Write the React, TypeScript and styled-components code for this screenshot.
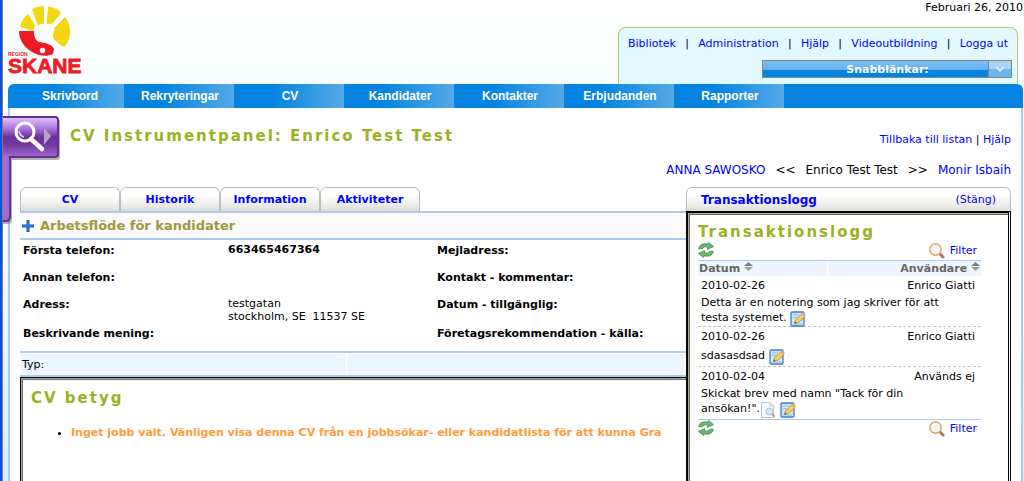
import React from "react";
import styled, { createGlobalStyle, css } from "styled-components";

const Global = createGlobalStyle`
  * { box-sizing: border-box; }
  html, body, #root { height: 100%; }
  body {
    margin: 0;
    background: #fff;
    color: #000;
    font: 11px/16px Verdana, "DejaVu Sans", sans-serif;
  }
  a { color: #00f; text-decoration: none; }
  svg { display: block; }
`;

const Page = styled.div`
  position: relative;
  display: flex;
  flex-direction: column;
  min-height: 100%;
  border-left: 2px solid #0a50d8;
  box-shadow: inset 1px 0 #808080;
  padding: 0 1px 0 6px;
  background: linear-gradient(#fff 0, #f8feff 84px, #fff 108px, #fff 200px, #d8ecfb 481px);
  background-clip: padding-box;
`;

const Header = styled.header`
  display: flex;
  justify-content: space-between;
  height: 84px;
`;

const Logo = styled.svg`
  margin-top: 5px;
`;

const HeaderRight = styled.div`
  display: flex;
  flex-direction: column;
  justify-content: space-between;
`;

const DateText = styled.div`
  text-align: right;
`;

const QuickBox = styled.div`
  display: flex;
  flex-direction: column;
  align-items: flex-end;
  gap: 8px;
  width: 400px;
  height: 57px;
  margin-right: 5px;
  padding: 8px 5px 0 9px;
  border: 1px solid #b9cc6c;
  border-bottom: 0;
  border-radius: 8px 8px 0 0;
  background: #e1f9ff;
`;

const TopLinks = styled.nav`
  display: flex;
  justify-content: space-between;
  align-self: stretch;
  padding-right: 4px;
`;

const QuickSelect = styled.button`
  display: flex;
  width: 250px;
  height: 18px;
  padding: 0;
  border: 1px solid #7c8a94;
  background: linear-gradient(#7dbcf0 0, #66b0ec 9px, #0484e0 9px);
  color: #fff;
  font: bold 11px/17px Verdana, "DejaVu Sans", sans-serif;
`;

const QuickLabel = styled.span`
  flex: 1;
  padding-left: 24px;
`;

const QuickArrow = styled.span`
  display: grid;
  place-items: center;
  width: 23px;
  height: 16px;
  border-left: 1px solid #7c8a94;
  background: linear-gradient(#a9d3f6 50%, #6fb4ec 50%);
`;

const MainNav = styled.nav`
  display: flex;
  height: 24px;
  padding-left: 6px;
  border-radius: 6px 6px 0 0;
  background: #0484e0;
`;

const NavItem = styled.a`
  width: 110px;
  padding-left: 2px;
  background: linear-gradient(90deg, #0484e0 35%, #55a9e6);
  color: #fff;
  font: bold 12px/25px "Liberation Sans", Arial, sans-serif;
  text-align: center;
`;

const Body = styled.main`
  display: flex;
  flex: 1;
  flex-direction: column;
  padding: 0 10px;
  border: solid #a8cbef;
  border-width: 0 2px;
  background: #fff;
`;

const TitleRow = styled.div`
  display: flex;
  justify-content: space-between;
  height: 54px;
  padding: 18px 0 0 50px;
`;

const heading = css`
  margin: 0;
  color: #9cb023;
  font-size: 15px;
  line-height: 20px;
  letter-spacing: 2px;
`;

const Title = styled.h1`${heading}`;
const SubTitle = styled.h2`${heading}`;

const TitleLinks = styled.div`
  padding-top: 6px;
`;

const Pager = styled.div`
  display: flex;
  justify-content: flex-end;
  gap: 10px;
  height: 25px;
  font-size: 12px;
`;

const Columns = styled.div`
  display: flex;
  flex: 1;
`;

const Left = styled.section`
  display: flex;
  flex: 1;
  flex-direction: column;
  min-width: 0;
  overflow: hidden;
  white-space: nowrap;
`;

const tabLook = css`
  height: 24px;
  border: 1px solid #bdbdbd;
  border-bottom: 0;
  border-radius: 6px 6px 0 0;
  background: linear-gradient(#fff 30%, #f3f3f1 60%, #dcdcd9);
  line-height: 24px;
`;

const Tabs = styled.div`
  display: flex;
`;

const Tab = styled.a`
  ${tabLook}
  width: 100px;
  font-weight: bold;
  text-align: center;
`;

const Workflow = styled.h2`
  display: flex;
  align-items: center;
  gap: 6px;
  height: 29px;
  margin: 0;
  padding-left: 2px;
  border: solid #a8cbef;
  border-width: 2px 0;
  background: #fafafa;
  color: #a0993a;
  font-size: 13px;
`;

const Fields = styled.dl`
  display: grid;
  grid-template-columns: 205px 209px 230px 1fr;
  grid-template-rows: 27px 27px 29px 25px;
  height: 111px;
  margin: 0;
  padding: 3px 0 0 3px;
`;

const Field = styled.dt`
  font-weight: bold;
`;

const Value = styled.dd<{ $bold?: boolean }>`
  margin: 0;
  font-weight: ${(p) => (p.$bold ? "bold" : "normal")};
  line-height: 13px;
  white-space: pre;
`;

const TypeRow = styled.div`
  display: grid;
  grid-template-columns: 325px 1fr;
  gap: 1px;
  height: 26px;
  padding: 1px;
  border: solid #a8cbef;
  border-width: 2px 0;
`;

const TypeCell = styled.div`
  padding-left: 1px;
  background: #edf6fe;
  line-height: 21px;
`;

const Frame = styled.div`
  flex: 1;
  border: solid #000;
  border-width: 1px 0 0 1px;
  box-shadow: inset 1px 1px #aca899, inset 2px 2px #716f64;
`;

const Rating = styled(Frame)`
  padding: 10px;
`;

const Notice = styled.ul`
  margin: 17px 0 0;
  padding-left: 40px;
`;

const NoticeText = styled.strong`
  color: #ff9c3a;
`;

const Log = styled.aside`
  display: flex;
  flex-direction: column;
  width: 325px;
`;

const LogTab = styled.div`
  ${tabLook}
  display: flex;
  justify-content: space-between;
  padding: 0 14px;
`;

const LogTitle = styled.a`
  font-size: 12px;
  font-weight: bold;
`;

const LogFrame = styled(Frame)`
  padding: 9px 27px 0 10px;
  border-width: 2px 3px 0 2px;
  border-right-style: double;
`;

const Tools = styled.div`
  display: flex;
  align-items: flex-start;
  justify-content: space-between;
  height: 18px;
  padding-right: 4px;
`;

const IconButton = styled.button`
  padding: 0;
  border: 0;
  background: none;
`;

const FilterLink = styled.a`
  display: flex;
  align-items: center;
  gap: 5px;
  line-height: 18px;
`;

const LogTable = styled.table`
  width: 100%;
  border-collapse: separate;
  border-spacing: 0;
  border: solid #a8cbef;
  border-width: 1px 0;
`;

const Th = styled.th<{ $right?: boolean }>`
  height: 15px;
  padding: 0 1px;
  border-left: ${(p) => (p.$right ? "1px solid #fff" : "0")};
  background: #edf6fe;
  color: #666;
  line-height: 14px;
  text-align: ${(p) => (p.$right ? "right" : "left")};
  svg { display: inline-block; }
`;

const Td = styled.td<{ $right?: boolean }>`
  height: 18px;
  padding: 1px 6px 0 3px;
  text-align: ${(p) => (p.$right ? "right" : "left")};
`;

const Note = styled.td`
  height: 22px;
  padding: 1px 20px 1px 3px;
  border-bottom: 1px dashed #c4c4c4;
  line-height: 15px;
  tr:last-child > & { padding-bottom: 3px; border-bottom: 0; }
  svg { display: inline-block; margin: -2px 0; vertical-align: -4px; }
`;

const SearchFlap = styled.button`
  position: absolute;
  top: 115px;
  left: 1px;
  padding: 0;
  border: 0;
  background: none;
`;

const RefreshIcon = () => (
  <svg width="16" height="16" viewBox="0 0 16 16" fill="#6bb56c" stroke="#3f8549" strokeWidth=".8" strokeLinejoin="round">
    <path d="M.6 6.800C1.500 2.600 5.500 1 9.500 2.300L10.500.500 15.500 4.600 9.400 7.300 9.600 5.300C7.500 4.400 5.500 4.800 4.600 6.500Z" />
    <path d="M15.400 9.200C14.500 13.400 10.500 15 6.500 13.700L5.500 15.500.500 11.400 6.600 8.700 6.400 10.700C8.500 11.600 10.500 11.200 11.400 9.500Z" />
  </svg>
);

const FilterIcon = () => (
  <svg width="16" height="16" viewBox="0 0 16 16">
    <path d="M10.800 10.800 14 14" stroke="#b07a58" strokeWidth="3" strokeLinecap="round" />
    <circle cx="6.500" cy="6.500" r="5.700" fill="#f1f3f6" stroke="#dba660" strokeWidth="1.400" />
    <path d="M3.200 6.500A3.300 3.300 0 0 1 6.500 3.200" stroke="#fff" fill="none" />
  </svg>
);

const EditIcon = () => (
  <svg width="16" height="16" viewBox="0 0 16 16">
    <rect x="1" y="1" width="13" height="14" rx="1" fill="#cfe4f8" stroke="#3b7fcb" strokeWidth="1.300" />
    <path d="M3 4H9M3 6.500H7M3 13H12" stroke="#9cc3e8" />
    <path d="M4.500 12.500 5.500 9 12 2.500 15 5.500 8.500 11.500Z" fill="#f7cf62" stroke="#b98a35" strokeWidth=".8" />
    <path d="M12 2.500 13.300 1.400 16 4.200 15 5.500Z" fill="#e9a27c" />
    <path d="M4.500 12.500 5 10.500 6.500 12Z" fill="#444" />
  </svg>
);

const PreviewIcon = () => (
  <svg width="16" height="16" viewBox="0 0 16 16">
    <path d="M1.500.5H10L13.500 4V15.500H1.500Z" fill="#f8f9fa" stroke="#c3c7cb" />
    <path d="M10 .5V4H13.500" fill="#e2e5e8" stroke="#c3c7cb" />
    <path d="M12 12 14.500 14.700" stroke="#c69a80" strokeWidth="2" />
    <circle cx="9.500" cy="9.500" r="3.400" fill="#d2e6f7" stroke="#a9c4dc" />
  </svg>
);

const SortIcon = () => (
  <svg width="9" height="10" viewBox="0 0 9 10">
    <path d="M4.500 0 9 4H0Z" fill="#7d7d7d" />
    <path d="M0 5H9L4.500 9Z" fill="#9d9d9d" />
  </svg>
);

const PlusIcon = () => (
  <svg width="12" height="12" viewBox="0 0 12 12">
    <path d="M4.500 0H7.500V4.500H12V7.500H7.500V12H4.500V7.500H0V4.500H4.500Z" fill="#1c5fbe" />
    <path d="M6 1V11M1 6H11" stroke="#2f86dc" />
  </svg>
);

const SkaneLogo = () => (
  <Logo width="80" height="76" viewBox="8 5 80 76" role="img" aria-label="Region Skåne">
    <g fill="#f2d60f">
      <path d="M28 14 35 25 33 31 20 27C21 22 24 17 28 14Z" />
      <path d="M32 9C36 7 40 6 44 6L44 24C42 23.500 40 24 38 26Z" />
      <path d="M48 6.500C53 7 58 9 61 13L52 24C50 23.500 48 24 46.500 23.500Z" />
      <path d="M65 17C69 22 70 27 70 32 70 39 67 44 64 47L60 45C57 41 53 40 53 36 53 33 55 31 54 28Z" />
    </g>
    <path d="M19 31H34C34 36 35 40 39 42 44 43 51 43 54 49L53 54C47 57 38 56 32 52 24 47 19 40 19 31Z" fill="#ed1c24" />
    <circle cx="42.500" cy="50.500" r="2.700" fill="#fff" />
    <g fill="#ed1c24" fontFamily="Liberation Sans, Arial, sans-serif" fontWeight="bold">
      <text x="8" y="56" fontSize="5">REGION</text>
      <text x="8" y="73" fontSize="21" stroke="#ed1c24" strokeWidth=".8">SKANE</text>
    </g>
  </Logo>
);

const FlapArt = () => (
  <svg width="58" height="112" viewBox="0 0 58 112">
    <defs>
      <linearGradient id="flap" gradientUnits="userSpaceOnUse" x1="0" y1="2" x2="0" y2="42">
        <stop offset="0" stopColor="#e6caff" />
        <stop offset=".3" stopColor="#a970da" />
        <stop offset=".5" stopColor="#6b3199" />
        <stop offset=".7" stopColor="#74389f" />
        <stop offset="1" stopColor="#a06bd2" />
      </linearGradient>
    </defs>
    <path d="M0 4H54Q57 4 57 7V42Q57 45 54 45H9V105Q9 109 5 109H0Z" fill="#666" opacity=".5" />
    <path d="M-3 2H52Q55 2 55 5V39Q55 42 52 42H7V102Q7 106 3 106H-3Z" fill="url(#flap)" stroke="#622f92" strokeWidth="2" />
    <path d="M41 13 48 21 41 30Z" fill="#b5a3c6" />
    <path d="M28 24 39 34" stroke="#fff" strokeWidth="4.500" strokeLinecap="round" />
    <circle cx="22" cy="17" r="9" fill="none" stroke="#fff" strokeWidth="3" />
    <path d="M16 16Q17 21 21 22" stroke="#e3d2f3" fill="none" strokeWidth="1.500" />
  </svg>
);

const topLinks = ["Bibliotek", "Administration", "Hjälp", "Videoutbildning", "Logga ut"];
const navItems = ["Skrivbord", "Rekryteringar", "CV", "Kandidater", "Kontakter", "Erbjudanden", "Rapporter"];
const tabs = ["CV", "Historik", "Information", "Aktiviteter"];
const entries = [
  { date: "2010-02-26", user: "Enrico Giatti", text: "Detta är en notering som jag skriver för att testa systemet. ", preview: false },
  { date: "2010-02-26", user: "Enrico Giatti", text: "sdasasdsad ", preview: false },
  { date: "2010-02-04", user: "Används ej", text: 'Skickat brev med namn "Tack för din ansökan!".', preview: true },
];

const LogTools = () => (
  <Tools>
    <IconButton aria-label="Uppdatera"><RefreshIcon /></IconButton>
    <FilterLink href="#"><FilterIcon />Filter</FilterLink>
  </Tools>
);

export default function App() {
  return (
    <>
      <Global />
      <Page>
        <Header>
          <SkaneLogo />
          <HeaderRight>
            <DateText>Februari 26, 2010</DateText>
            <QuickBox>
              <TopLinks>
                {topLinks.map((label, i) => (
                  <React.Fragment key={label}>
                    {i > 0 && <span>|</span>}
                    <a href="#">{label}</a>
                  </React.Fragment>
                ))}
              </TopLinks>
              <QuickSelect>
                <QuickLabel>Snabblänkar:</QuickLabel>
                <QuickArrow>
                  <svg width="8" height="5" viewBox="0 0 8 5"><path d="M.5.500 4 4 7.500.5" fill="none" stroke="#fff" strokeWidth="1.200" /></svg>
                </QuickArrow>
              </QuickSelect>
            </QuickBox>
          </HeaderRight>
        </Header>
        <MainNav>
          {navItems.map((label) => <NavItem href="#" key={label}>{label}</NavItem>)}
        </MainNav>
        <Body>
          <TitleRow>
            <Title>CV Instrumentpanel: Enrico Test Test</Title>
            <TitleLinks><a href="#">Tillbaka till listan</a> | <a href="#">Hjälp</a></TitleLinks>
          </TitleRow>
          <Pager>
            <a href="#">ANNA SAWOSKO</a>
            <span>&lt;&lt;</span>
            <span>Enrico Test Test</span>
            <span>&gt;&gt;</span>
            <a href="#">Monir Isbaih</a>
          </Pager>
          <Columns>
            <Left>
              <Tabs>{tabs.map((label) => <Tab href="#" key={label}>{label}</Tab>)}</Tabs>
              <Workflow><PlusIcon />Arbetsflöde för kandidater</Workflow>
              <Fields>
                <Field>Första telefon:</Field><Value $bold>663465467364</Value>
                <Field>Mejladress:</Field><Value />
                <Field>Annan telefon:</Field><Value />
                <Field>Kontakt - kommentar:</Field><Value />
                <Field>Adress:</Field><Value>{"testgatan\nstockholm, SE  11537 SE"}</Value>
                <Field>Datum - tillgänglig:</Field><Value />
                <Field>Beskrivande mening:</Field><Value />
                <Field>Företagsrekommendation - källa:</Field><Value />
              </Fields>
              <TypeRow><TypeCell>Typ:</TypeCell><TypeCell /></TypeRow>
              <Rating>
                <SubTitle>CV betyg</SubTitle>
                <Notice>
                  <li><NoticeText>Inget jobb valt. Vänligen visa denna CV från en jobbsökar- eller kandidatlista för att kunna Gra</NoticeText></li>
                </Notice>
              </Rating>
            </Left>
            <Log>
              <LogTab><LogTitle href="#">Transaktionslogg</LogTitle><a href="#">(Stäng)</a></LogTab>
              <LogFrame>
                <SubTitle>Transaktionslogg</SubTitle>
                <LogTools />
                <LogTable>
                  <thead>
                    <tr><Th>Datum <SortIcon /></Th><Th $right>Användare <SortIcon /></Th></tr>
                  </thead>
                  <tbody>
                    {entries.map((e, i) => (
                      <React.Fragment key={i}>
                        <tr><Td>{e.date}</Td><Td $right>{e.user}</Td></tr>
                        <tr><Note colSpan={2}>{e.text}{e.preview && <><PreviewIcon /> </>}<EditIcon /></Note></tr>
                      </React.Fragment>
                    ))}
                  </tbody>
                </LogTable>
                <LogTools />
              </LogFrame>
            </Log>
          </Columns>
        </Body>
        <SearchFlap aria-label="Sök"><FlapArt /></SearchFlap>
      </Page>
    </>
  );
}
